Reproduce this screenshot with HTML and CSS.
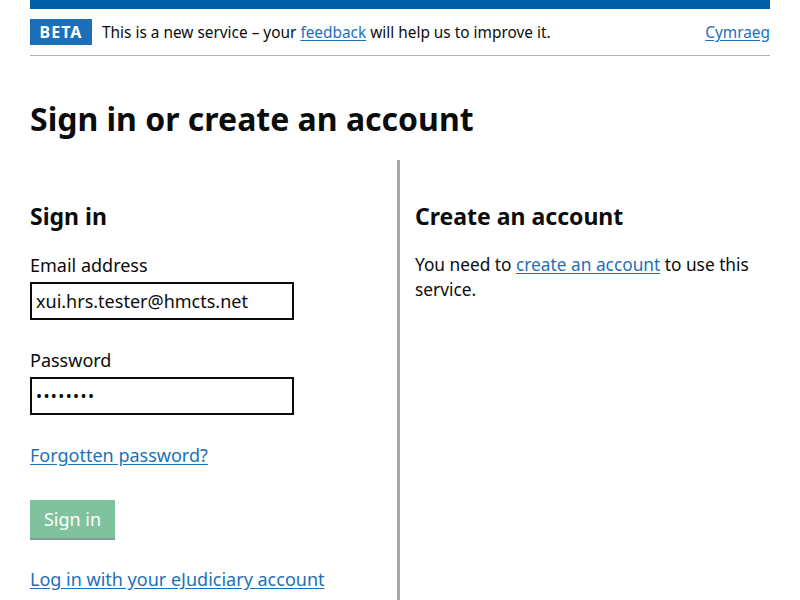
FILE: index.html
```html
<!DOCTYPE html>
<html lang="en">
<head>
<meta charset="utf-8">
<title>Sign in or create an account</title>
<link rel="stylesheet" href="styles.css">
</head>
<body>
<div class="page">
  <div class="topbar"></div>
  <div class="phase">
    <span class="tag">BETA</span>
    <span class="phase-text">This is a new service – your <a href="#">feedback</a> will help us to improve it.</span>
    <a class="lang" href="#">Cymraeg</a>
  </div>
  <h1 class="title">Sign in or create an account</h1>
  <div class="cols">
    <div class="col col-left">
      <h2 class="h2">Sign in</h2>
      <label class="label">Email address</label>
      <div class="input">xui.hrs.tester@hmcts.net</div>
      <label class="label label-pw">Password</label>
      <div class="input input-pw">••••••••</div>
      <a class="link forgot" href="#">Forgotten password?</a>
      <button class="btn" type="button">Sign in</button>
      <a class="link ejud" href="#">Log in with your eJudiciary account</a>
    </div>
    <div class="col col-right">
      <h2 class="h2">Create an account</h2>
      <p class="body">You need to <a class="link" href="#">create an account</a> to use this service.</p>
    </div>
  </div>
</div>
</body>
</html>
```
FILE: styles.css
```css
* { box-sizing: border-box; }
html, body { margin: 0; padding: 0; background: #fff; }
body {
  font-family: "Noto Sans", "Liberation Sans", sans-serif;
  color: #0b0c0c;
  overflow: hidden;
  height: 600px;
}
.page { margin: 0 30px; }
.topbar { height: 9px; background: #005ea5; }
.phase {
  display: flex;
  align-items: center;
  height: 47px;
  border-bottom: 1px solid #b1b4b6;
  font-size: 15.4px;
}
.tag {
  display: inline-block;
  background: #1d70b8;
  color: #fff;
  font-weight: 700;
  font-size: 16px;
  letter-spacing: 1px;
  width: 62px;
  height: 26px;
  line-height: 26px;
  text-align: center;
  margin-right: 10px;
}
.phase-text { flex: 1; }
.phase a { color: #1d70b8; text-decoration: underline; text-underline-offset: 2px; }
.title {
  font-size: 32px;
  font-weight: 700;
  margin: 41px 0 0;
  line-height: 44px;
  height: 63px;
}
.cols { display: flex; }
.col-left {
  width: 370px;
  flex-shrink: 0;
  border-right: 3px solid #a3a9ae;
  height: 440px;
  padding-top: 40px;
  display: flex;
  flex-direction: column;
  align-items: flex-start;
}
.col-left > * { flex-shrink: 0; }
.col-right { padding-left: 15px; padding-top: 40px; }
.h2 {
  font-size: 23px;
  font-weight: 700;
  margin: 0;
  line-height: 32px;
}
.label {
  font-size: 18px;
  margin-top: 20px;
  line-height: 26px;
}
.label-pw { margin-top: 27px; }
.input {
  margin-top: 4px;
  width: 264px;
  height: 38px;
  border: 2px solid #0b0c0c;
  font-size: 18px;
  line-height: 34px;
  padding-left: 4px;
}
.input-pw { letter-spacing: 1.4px; font-size: 16px; }
.link { color: #1d70b8; text-decoration: underline; text-underline-offset: 2px; font-size: 18px; }
.forgot { margin-top: 27px; line-height: 26px; }
.btn {
  margin-top: 32px;
  width: 85px;
  height: 40px;
  border: 0;
  background: #80c29d;
  box-shadow: inset 0 -2px 0 #7f9e8b;
  color: #fff;
  font-family: inherit;
  font-size: 18px;
  padding: 0 0 3px;
}
.ejud { margin-top: 26px; line-height: 26px; }
.body { font-size: 17.3px; line-height: 25px; margin: 20px 0 0; max-width: 355px; }
.body .link { font-size: 17.3px; }
```
